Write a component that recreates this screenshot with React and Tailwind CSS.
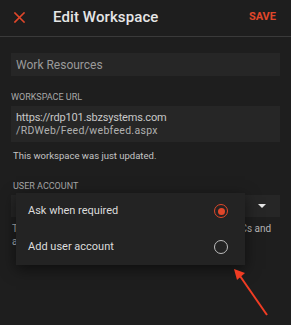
import React from "react";

const App = () => {
  return (
    <div className="relative w-[291px] h-[325px] overflow-hidden bg-[#1e1e1e] font-['Roboto',sans-serif]">
      <div className="flex items-center h-[37px] border-b border-[#3a3a3a] pl-[14px] pr-[15px]">
        <svg width="11" height="11" viewBox="0 0 11 11" className="mt-[-2px]">
          <path d="M1 1 L10 10 M10 1 L1 10" stroke="#e0472a" strokeWidth="1.6" strokeLinecap="square" />
        </svg>
        <h1 className="ml-[28px] mt-[-2px] text-[15px] font-medium text-[#e6e6e6] tracking-[0.1px]">Edit Workspace</h1>
        <span className="ml-auto mt-[-2px] text-[11px] font-bold text-[#e0472a]">SAVE</span>
      </div>

      <div className="px-[11px]">
        <div className="mt-[16px] h-[23px] bg-[#262626] flex items-center pl-[5px] text-[12px] text-[#9a9a9a]">
          Work Resources
        </div>

        <div className="mt-[17px] text-[9px] text-[#a8a8a8] leading-none">WORKSPACE URL</div>
        <div className="mt-[4px] h-[36px] bg-[#262626] pl-[5px] pt-[5px]">
          <div className="text-[11px] leading-[14px] tracking-[-0.2px] text-[#c8c8c8]">https://rdp101.sbzsystems.com</div>
          <div className="text-[10.5px] leading-[12px] tracking-[0.3px] text-[#b0b0b0]">/RDWeb/Feed/webfeed.aspx</div>
        </div>
        <div className="mt-[7px] pl-[2px] text-[9.5px] text-[#c4c4c4]">This workspace was just updated.</div>

        <div className="mt-[19px] pl-[2px] text-[9px] text-[#a8a8a8] leading-none">USER ACCOUNT</div>
        <div className="mt-[4px] h-[22px] bg-[#262626] flex items-center justify-end pr-[14px]">
          <svg width="8" height="5" viewBox="0 0 8 5">
            <path d="M0 0 L8 0 L4 4 Z" fill="#e6e6e6" />
          </svg>
        </div>
        <p className="mt-[5px] w-[270px] pl-[1px] text-[10px] leading-[13px] text-[#b4b4b4]">
          The user account that is used to sign in to remote PCs and apps in this workspace.
        </p>
      </div>

      <div className="absolute left-[16px] top-[193px] w-[229px] h-[72px] bg-[#232323] shadow-[0_4px_14px_rgba(0,0,0,0.55)] flex flex-col">
        <div className="flex items-center h-[36px] pl-[12px] pr-[17px]">
          <span className="text-[11px] text-[#dcdcdc]">Ask when required</span>
          <span className="ml-auto w-[14px] h-[14px] rounded-full border-[1.5px] border-[#e0472a] flex items-center justify-center">
            <span className="w-[7px] h-[7px] rounded-full bg-[#e0472a]" />
          </span>
        </div>
        <div className="flex items-center h-[36px] pl-[12px] pr-[17px]">
          <span className="text-[11px] text-[#dcdcdc]">Add user account</span>
          <span className="ml-auto w-[14px] h-[14px] rounded-full border-[1.5px] border-[#bdbdbd]" />
        </div>
      </div>

      <svg className="absolute left-0 top-0" width="291" height="325" viewBox="0 0 291 325">
        <path d="M267 315 L240 276" stroke="#f03c23" strokeWidth="2" />
        <path d="M234 269 L245 273 L237 280 Z" fill="#f03c23" />
      </svg>
    </div>
  );
};

export default App;
